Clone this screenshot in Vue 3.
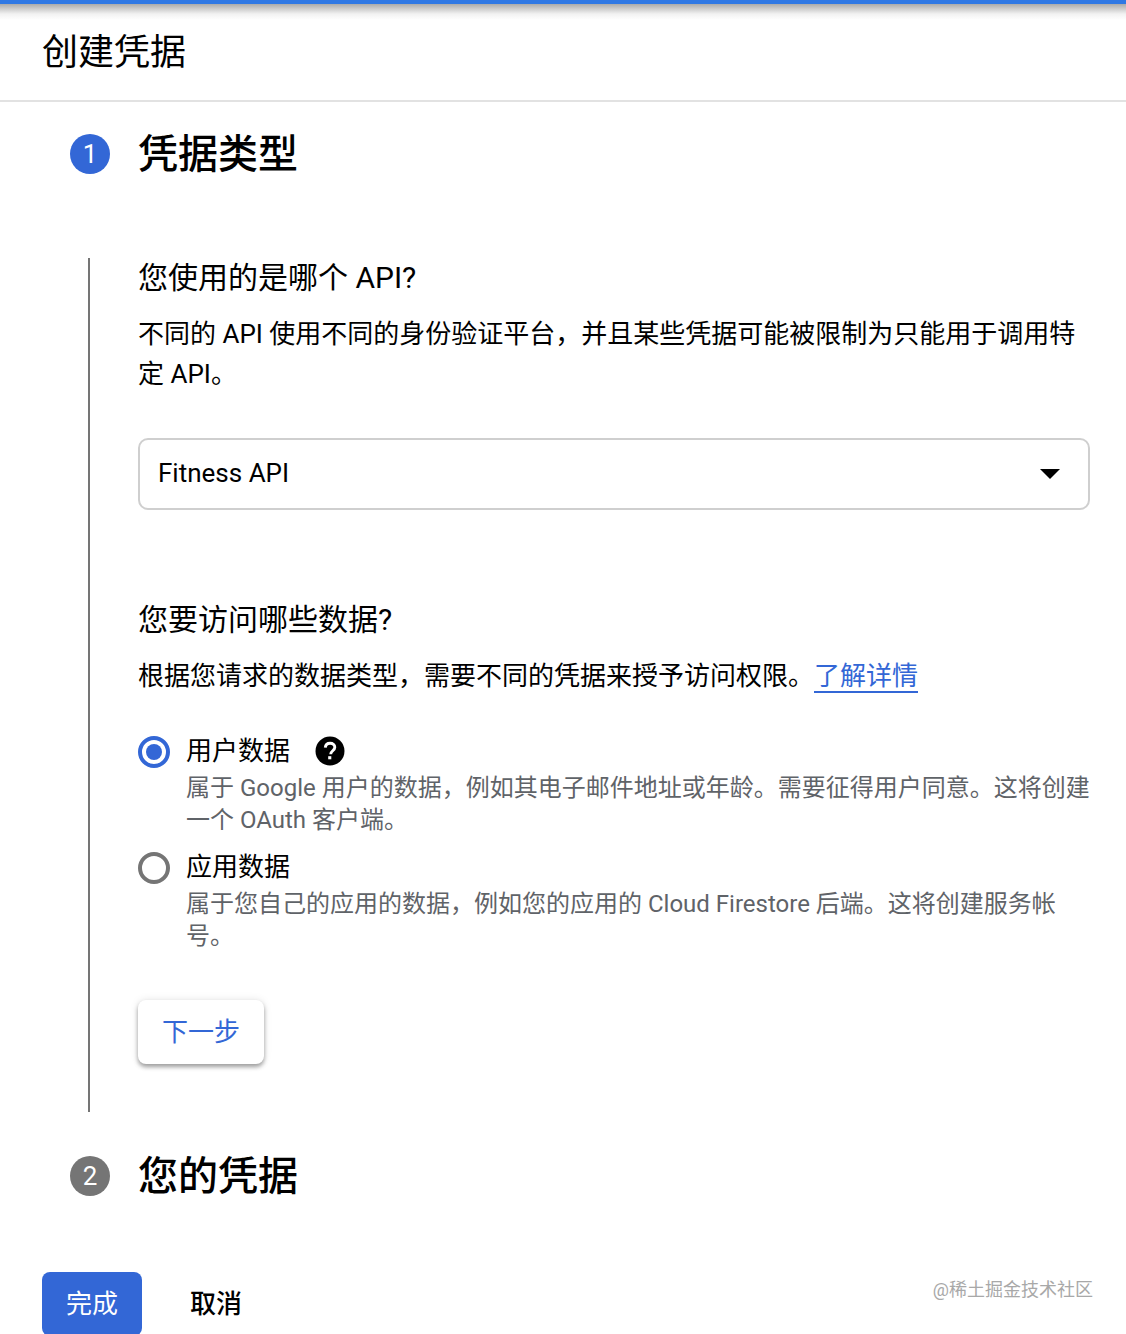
<script setup>
const options = [
  { title: '用户数据', help: true, on: true, desc: '属于 Google 用户的数据，例如其电子邮件地址或年龄。需要征得用户同意。这将创建一个 OAuth 客户端。' },
  { title: '应用数据', help: false, on: false, desc: '属于您自己的应用的数据，例如您的应用的 Cloud Firestore 后端。这将创建服务帐号。' }
]
</script>

<template>
  <div class="page">
    <header class="head">
      <h1>创建凭据</h1>
    </header>

    <section class="step-head first">
      <span class="num blue">1</span>
      <h2>凭据类型</h2>
    </section>

    <section class="step-body">
      <div class="rail"></div>
      <div class="content">
        <h3>您使用的是哪个 API?</h3>
        <p class="para">不同的 API 使用不同的身份验证平台，并且某些凭据可能被限制为只能用于调用特定 API。</p>

        <div class="select">
          <span class="sel-text">Fitness API</span>
          <i class="caret"></i>
        </div>

        <h3 class="q2">您要访问哪些数据?</h3>
        <p class="para one">根据您请求的数据类型，需要不同的凭据来授予访问权限。<a class="link">了解详情</a></p>

        <div class="options">
          <div v-for="o in options" :key="o.title" class="opt">
            <span class="radio" :class="{ on: o.on }"></span>
            <div class="opt-text">
              <div class="opt-title">
                {{ o.title }}
                <svg v-if="o.help" class="help" viewBox="0 0 30 30" width="30" height="30">
                  <circle cx="15" cy="15" r="14.5" fill="#000" />
                  <path d="M10.3 11.6c.2-2.7 2.2-4.3 4.8-4.3 2.700 0 4.700 1.600 4.700 4 0 3.400-4.100 3.500-4.100 6.900" fill="none" stroke="#fff" stroke-width="2.900" />
                  <rect x="13.200" y="20.200" width="3.100" height="3.100" fill="#fff" />
                </svg>
              </div>
              <div class="opt-desc">{{ o.desc }}</div>
            </div>
          </div>
        </div>

        <button class="next">下一步</button>
      </div>
    </section>

    <section class="step-head second">
      <span class="num gray">2</span>
      <h2>您的凭据</h2>
    </section>

    <footer class="foot">
      <button class="done">完成</button>
      <button class="cancel">取消</button>
    </footer>

    <div class="mark">@稀土掘金技术社区</div>
  </div>
</template>

<style>
html, body { background: #fff; }
</style>

<style scoped>
.page {
  position: relative;
  width: 1126px;
  height: 1334px;
  overflow: hidden;
  background: #fff;
  color: #000;
  font-family: Roboto, "Noto Sans CJK SC", sans-serif;
}
.head {
  height: 102px;
  box-sizing: border-box;
  border-top: 4px solid #2f78e4;
  border-bottom: 2px solid #e2e2e2;
  padding-left: 42px;
  background: linear-gradient(#aaa 0, #f2f2f2 10px, #fff 16px);
  display: flex;
  align-items: center;
}
h1 {
  margin: 2px 0 0;
  font-size: 36px;
  font-weight: 400;
  line-height: 48px;
}
.step-head {
  display: flex;
  align-items: center;
  padding-left: 70px;
  height: 40px;
}
.step-head.first { margin-top: 32px; }
.step-head.second { margin-top: 44px; }
h2 {
  margin: 2px 0 0 28px;
  font-size: 40px;
  font-weight: 500;
  line-height: 40px;
}
.num {
  width: 40px;
  height: 40px;
  border-radius: 50%;
  color: #fff;
  font-size: 26px;
  line-height: 40px;
  text-align: center;
}
.blue { background: #3367d6; }
.gray { background: #757575; }
.step-body {
  display: flex;
  margin-top: 84px;
  padding-left: 88px;
  height: 854px;
}
.rail {
  width: 2px;
  background: #757575;
  flex: none;
}
.content {
  margin-left: 48px;
  width: 952px;
}
h3 {
  margin: 0;
  font-size: 30px;
  font-weight: 400;
  line-height: 40px;
}
.para {
  margin: 16px 0 0;
  font-size: 26px;
  line-height: 40px;
}
.select {
  margin: 44px 0 0;
  box-sizing: border-box;
  width: 952px;
  height: 72px;
  border: 2px solid #cfcfcf;
  border-radius: 10px;
  padding: 0 28px 0 18px;
  display: flex;
  align-items: center;
  justify-content: space-between;
  font-size: 26px;
}
.sel-text { margin-top: -2px; }
.caret {
  border-left: 10px solid transparent;
  border-right: 10px solid transparent;
  border-top: 10px solid #000;
}
.q2 { margin-top: 90px; }
.link {
  color: #3367d6;
  border-bottom: 2px solid #3367d6;
}
.options { margin-top: 39px; }
.opt {
  display: flex;
  height: 116px;
}
.radio {
  flex: none;
  box-sizing: border-box;
  width: 32px;
  height: 32px;
  margin-top: 1px;
  border: 4px solid #757575;
  border-radius: 50%;
  position: relative;
}
.radio.on { border-color: #3367d6; }
.radio.on::after {
  content: "";
  position: absolute;
  left: 4px;
  top: 4px;
  width: 16px;
  height: 16px;
  border-radius: 50%;
  background: #3367d6;
}
.opt-text {
  margin-left: 16px;
  width: 906px;
}
.opt-title {
  display: flex;
  align-items: center;
  gap: 25px;
  font-size: 26px;
  line-height: 32px;
  height: 32px;
}
.opt-desc {
  margin-top: 5px;
  font-size: 24px;
  line-height: 32px;
  color: #5f6368;
}
.next {
  display: block;
  margin-top: 33px;
  width: 126px;
  height: 64px;
  border: 0;
  border-radius: 8px;
  background: #fff;
  color: #3367d6;
  font: inherit;
  font-size: 26px;
  padding: 0 0 5px;
  box-shadow: 0 3px 4px rgba(0,0,0,.35), 0 0 8px rgba(0,0,0,.1);
}
.foot {
  display: flex;
  align-items: flex-start;
  margin-top: 76px;
  padding-left: 42px;
}
.done {
  width: 100px;
  height: 64px;
  border: 0;
  border-radius: 8px;
  background: #3367d6;
  color: #fff;
  font: inherit;
  font-size: 26px;
  padding: 0 0 6px;
}
.cancel {
  margin-left: 48px;
  height: 64px;
  border: 0;
  background: none;
  color: #000;
  font: inherit;
  font-size: 26px;
  font-weight: 500;
  padding: 0 0 6px;
}
.mark {
  position: absolute;
  right: 33px;
  top: 1278px;
  font-size: 18px;
  line-height: 24px;
  color: #a8a8a8;
}
</style>
